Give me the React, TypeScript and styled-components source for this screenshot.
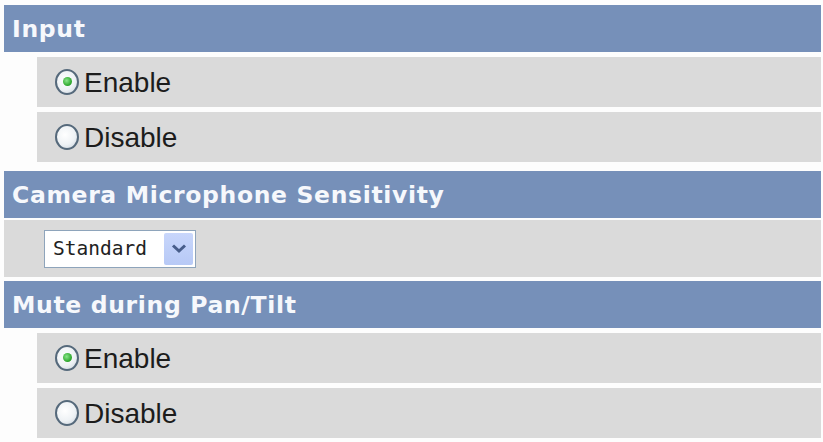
import { useState } from "react";
import styled, { createGlobalStyle } from "styled-components";

const GlobalStyle = createGlobalStyle`
  body {
    margin: 0;
    background: #fdfdfd;
    font-family: "Liberation Sans", Arial, sans-serif;
  }
`;

type Choice = "enable" | "disable";

function RadioRow({
  label,
  checked,
  onSelect,
}: {
  label: string;
  checked: boolean;
  onSelect: () => void;
}) {
  return (
    <StyledRadioRow onClick={onSelect}>
      <StyledRadio $checked={checked} />
      <span>{label}</span>
    </StyledRadioRow>
  );
}

function App() {
  const [input, setInput] = useState<Choice>("enable");
  const [mute, setMute] = useState<Choice>("enable");

  return (
    <>
      <GlobalStyle />
      <StyledPage>
        <StyledHeader $top={5}>Input</StyledHeader>
        <RadioRow
          label="Enable"
          checked={input === "enable"}
          onSelect={() => setInput("enable")}
        />
        <RadioRow
          label="Disable"
          checked={input === "disable"}
          onSelect={() => setInput("disable")}
        />

        <StyledHeader $top={9}>Camera Microphone Sensitivity</StyledHeader>
        <StyledSelectRow>
          <StyledSelect>
            <span>Standard</span>
            <StyledArrow>
              <svg width="16" height="11" viewBox="0 0 16 11">
                <path
                  d="M2 2.5 L8 8 L14 2.5"
                  fill="none"
                  stroke="#475d8a"
                  strokeWidth="3"
                />
              </svg>
            </StyledArrow>
          </StyledSelect>
        </StyledSelectRow>

        <StyledHeader $top={4}>Mute during Pan/Tilt</StyledHeader>
        <RadioRow
          label="Enable"
          checked={mute === "enable"}
          onSelect={() => setMute("enable")}
        />
        <RadioRow
          label="Disable"
          checked={mute === "disable"}
          onSelect={() => setMute("disable")}
        />
      </StyledPage>
    </>
  );
}

export default App;

const StyledPage = styled.div`
  display: flex;
  flex-direction: column;
  padding: 0 2px 0 4px;
  width: 823px;
  height: 442px;
  box-sizing: border-box;
  overflow: hidden;
`;

const StyledHeader = styled.div<{ $top: number }>`
  display: flex;
  align-items: center;
  height: 47px;
  margin-top: ${(p) => p.$top}px;
  padding-left: 8px;
  background: #7690b9;
  color: #f6f8fc;
  font-family: "DejaVu Sans", Verdana, sans-serif;
  font-weight: bold;
  font-size: 23.5px;
  letter-spacing: 0.65px;
`;

const StyledRadioRow = styled.div`
  display: flex;
  align-items: center;
  height: 50px;
  margin: 5px 0 0 33px;
  padding-left: 13px;
  background: #dadada;
  color: #1c1c1c;
  font-size: 28px;
  cursor: pointer;
  & span {
    margin-left: 5px;
    padding-top: 2px;
  }
`;

const StyledRadio = styled.span<{ $checked: boolean }>`
  position: relative;
  width: 20px;
  height: 20px;
  border-radius: 50%;
  border: 2px solid #55697b;
  background: radial-gradient(circle at 40% 40%, #ffffff 0%, #eef2f5 55%, #c6d0da 100%);
  flex-shrink: 0;
  &::after {
    content: "";
    display: ${(p) => (p.$checked ? "block" : "none")};
    position: absolute;
    left: 5.5px;
    top: 5.5px;
    width: 9px;
    height: 9px;
    border-radius: 50%;
    background: radial-gradient(circle at 40% 40%, #8ae68a 0%, #2ea82e 65%, #1c7f1c 100%);
  }
`;

const StyledSelectRow = styled.div`
  display: flex;
  align-items: center;
  height: 57px;
  margin-top: 2px;
  padding-left: 40px;
  background: #dadada;
`;

const StyledSelect = styled.div`
  display: flex;
  align-items: center;
  justify-content: space-between;
  width: 152px;
  height: 38px;
  box-sizing: border-box;
  border: 1.5px solid #8ea4bb;
  background: #ffffff;
  padding: 2px 2px 2px 8px;
  font-family: "DejaVu Sans Mono", "Liberation Mono", monospace;
  font-size: 19.5px;
  color: #222222;
`;

const StyledArrow = styled.span`
  display: flex;
  align-items: center;
  justify-content: center;
  width: 29px;
  height: 100%;
  background: linear-gradient(#c8d6fb, #b7c9f6);
  border-radius: 2px;
`;
